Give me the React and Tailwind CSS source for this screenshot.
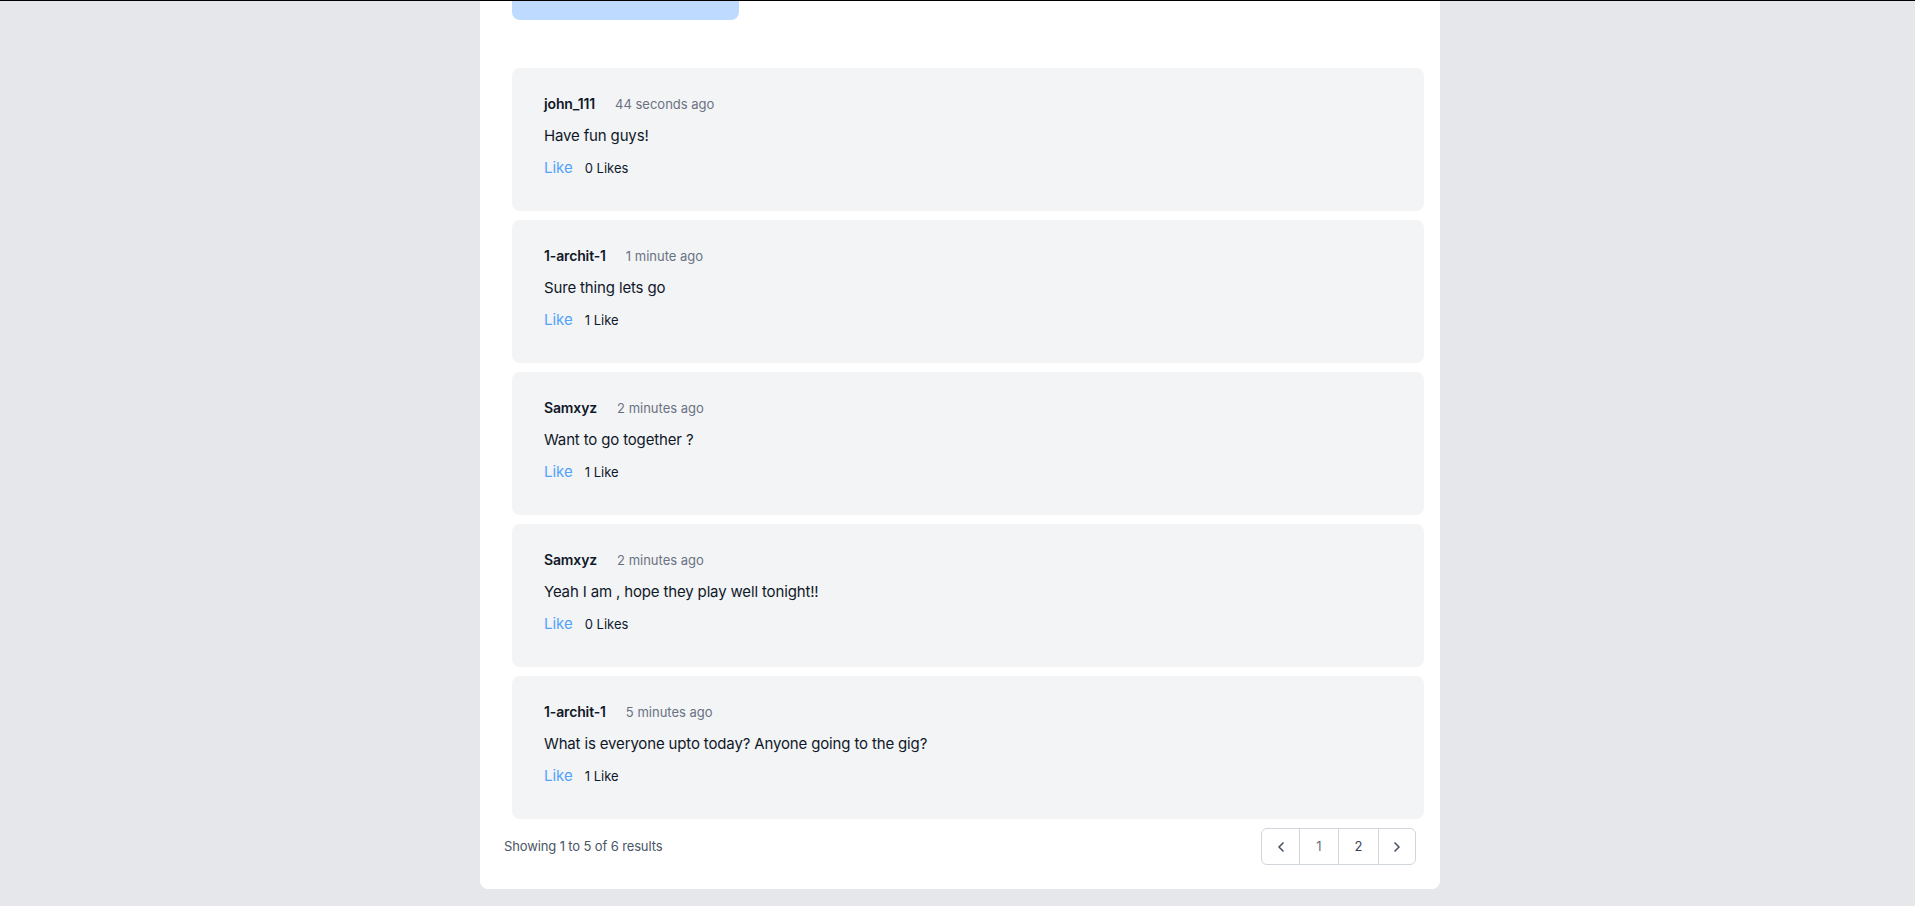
import { ChevronLeft, ChevronRight } from 'lucide-react'

const comments = [
  { user: 'john_111', time: '44 seconds ago', text: 'Have fun guys!', likes: '0 Likes' },
  { user: '1-archit-1', time: '1 minute ago', text: 'Sure thing lets go', likes: '1 Like' },
  { user: 'Samxyz', time: '2 minutes ago', text: 'Want to go together ?', likes: '1 Like' },
  { user: 'Samxyz', time: '2 minutes ago', text: 'Yeah I am , hope they play well tonight!!', likes: '0 Likes' },
  { user: '1-archit-1', time: '5 minutes ago', text: 'What is everyone upto today? Anyone going to the gig?', likes: '1 Like' },
]

const Comment = ({ c }) => (
  <div className="bg-gray-100 rounded-lg px-8 pt-6 pb-[31px] h-[143px]">
    <div className="flex items-center leading-6">
      <span className="text-sm font-semibold text-gray-900 tracking-[-0.01em]">{c.user}</span>
      <span className="ml-5 text-[13px] text-gray-500">{c.time}</span>
    </div>
    <p className="mt-2 text-[15px] leading-6 text-gray-900 tracking-[-0.01em]">{c.text}</p>
    <div className="mt-2 flex items-center leading-6">
      <button className="text-[15px] text-blue-400">Like</button>
      <span className="ml-3 text-[13px] text-gray-900">{c.likes}</span>
    </div>
  </div>
)

const App = () => {
  return (
    <div className="min-h-[906px] bg-gray-200" style={{ fontFamily: 'Inter, "Noto Sans", sans-serif' }}>
      <div className="h-px bg-black" />
      <div className="ml-[480px] w-[960px] bg-white rounded-b-lg px-6 pb-6">
        <div className="ml-2 w-[227px] h-[19px] bg-blue-200 rounded-b-lg" />
        <div className="ml-2 -mr-2 mt-[48px] flex flex-col gap-[9px]">
          {comments.map((c, i) => (
            <Comment key={i} c={c} />
          ))}
        </div>
        <div className="mt-[9px] flex items-center justify-between">
          <span className="text-[13px] text-gray-600 tracking-[-0.01em]">Showing 1 to 5 of 6 results</span>
          <div className="flex h-[37px] border border-gray-300 rounded-md text-[13px]">
            <button className="w-[37px] flex items-center justify-center text-gray-600">
              <ChevronLeft size={16} strokeWidth={2.5} />
            </button>
            <button className="w-[39px] border-l border-gray-300 text-gray-500">1</button>
            <button className="w-[40px] border-l border-gray-300 text-gray-700">2</button>
            <button className="w-[37px] border-l border-gray-300 flex items-center justify-center text-gray-600">
              <ChevronRight size={16} strokeWidth={2.5} />
            </button>
          </div>
        </div>
      </div>
    </div>
  )
}

export default App
